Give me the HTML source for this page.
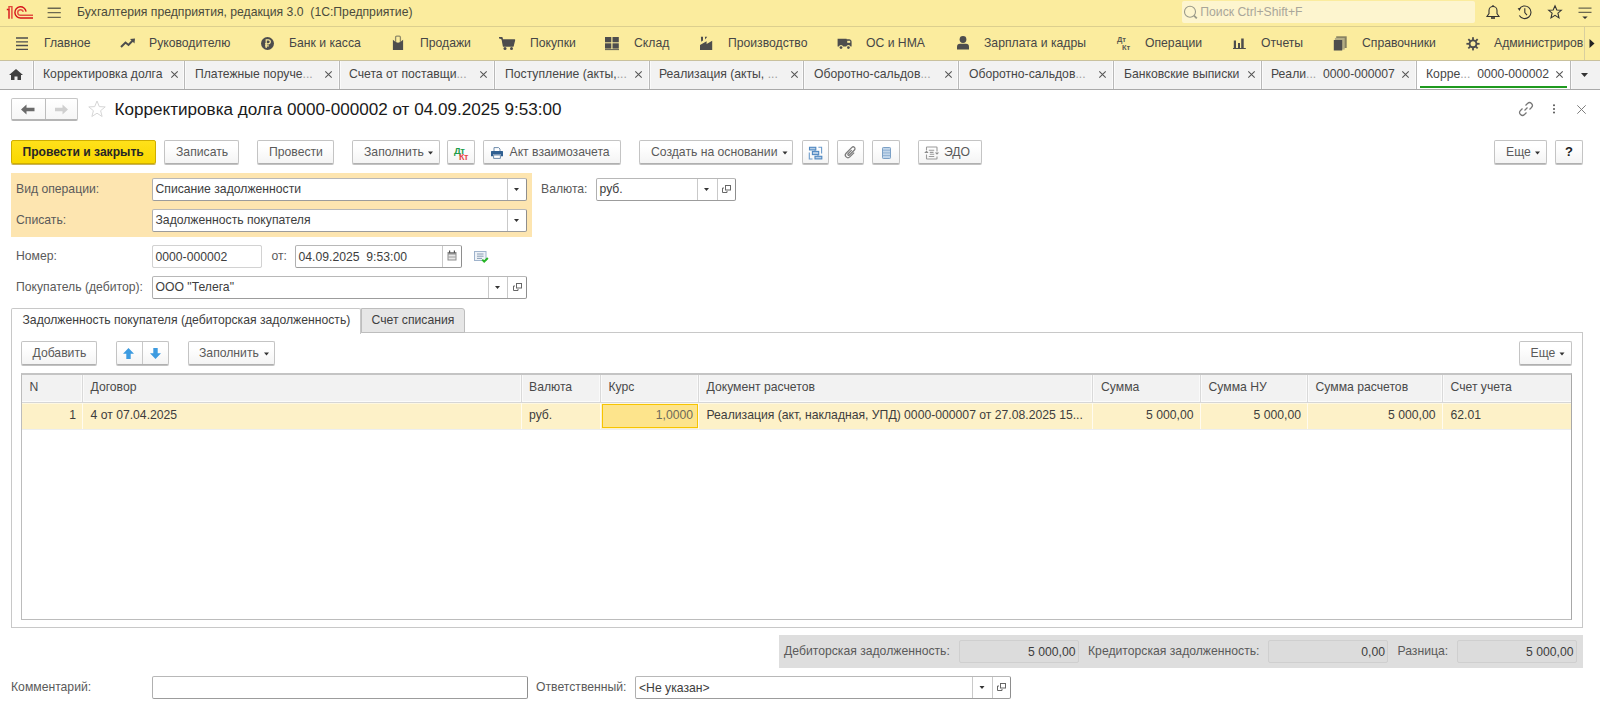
<!DOCTYPE html>
<html><head><meta charset="utf-8">
<style>
*{box-sizing:border-box;margin:0;padding:0}
html,body{width:1600px;height:708px;overflow:hidden;background:#fff;font-family:"Liberation Sans",sans-serif;font-size:12px;color:#4d4d4d}
.a{position:absolute}
.t{position:absolute;white-space:nowrap}
svg{overflow:visible}
</style></head><body>
<div class="a" style="left:0px;top:0px;width:1600px;height:26px;background:#fbec9e"></div>
<div class="a" style="left:0px;top:26px;width:1600px;height:1px;background:#dccf8e"></div>
<svg class="a" style="left:0px;top:0px" width="40" height="26" viewBox="0 0 40 26"><g fill="none" stroke-width="1.45">
<path d="M6.8 9.5 H9 V18.8" stroke="#d7141b"/><path d="M9 9.5 V6.6 H11.9 V18.8" stroke="#e2483c"/>
<path d="M26.05 11.6 A5.6 5.6 0 1 0 20.5 18 H33" stroke="#d7141b"/>
<path d="M23.2 11.95 A2.75 2.75 0 1 0 20.5 15.25 H33" stroke="#e2503e"/>
</g></svg>
<svg class="a" style="left:47px;top:7px" width="14" height="12" viewBox="0 0 14 12"><g stroke="#6b6850" stroke-width="1.4"><path d="M0.6 1.2H13.8M0.6 5.6H13.8M0.6 10.4H13.8"/></g></svg>
<div class="t" style="left:77px;top:5.27px;font-size:12.2px;line-height:14px;color:#4a4a3c;">Бухгалтерия предприятия, редакция 3.0&nbsp; (1С:Предприятие)</div>
<div class="a" style="left:1182px;top:1px;width:293px;height:22px;background:#fdf5cf;border-radius:2px"></div>
<svg class="a" style="left:1183px;top:5px" width="16" height="16" viewBox="0 0 16 16"><g fill="none" stroke="#9a9a8a" stroke-width="1.1"><circle cx="7" cy="6.7" r="5.5"/><path d="M11 10.7 L13.8 13.4" stroke-width="1.8"/></g></svg>
<div class="t" style="left:1200.3px;top:4.97px;font-size:12.2px;line-height:14px;color:#a9a69a;">Поиск Ctrl+Shift+F</div>
<svg class="a" style="left:1486px;top:5px" width="14" height="14" viewBox="0 0 14 14"><g fill="none" stroke="#333" stroke-width="1.1"><path d="M1 11.5 H13 L11 8.5 V5.5 A4 4 0 0 0 3 5.5 V8.5 Z"/></g><rect x="5" y="12.2" width="4" height="1.6" fill="#333"/><circle cx="7" cy="0.9" r="0.8" fill="#333"/></svg>
<svg class="a" style="left:1517px;top:5px" width="15" height="15" viewBox="0 0 15 15"><g fill="none" stroke="#333" stroke-width="1.1"><path d="M2.2 4.2 A6.3 6.3 0 1 1 2.3 10.5"/><path d="M7.8 3.3 V7.6 L10 10.2"/></g><path d="M0.6 3.2 L3.8 3 L2.6 6 Z" fill="#333"/></svg>
<svg class="a" style="left:1548px;top:5px" width="14" height="14" viewBox="0 0 14 14"><path d="M7 0.8 L8.8 5 L13.3 5.3 L9.9 8.2 L11 12.9 L7 10.4 L3 12.9 L4.1 8.2 L0.7 5.3 L5.2 5 Z" fill="none" stroke="#333" stroke-width="1.1" stroke-linejoin="miter"/></svg>
<svg class="a" style="left:1578px;top:6px" width="14" height="14" viewBox="0 0 14 14"><g stroke="#6b6850" stroke-width="1.3"><path d="M0.5 2.1H13.5M0.5 6.4H13.5"/></g><path d="M4.3 10.6 H9.7 L7 13 Z" fill="#333"/></svg>
<div class="a" style="left:0px;top:27px;width:1600px;height:33px;background:#fbec9e"></div>
<div class="a" style="left:0px;top:60px;width:1600px;height:1px;background:#c9c19d"></div>
<svg class="a" style="left:16px;top:37px" width="12" height="13" viewBox="0 0 12 13"><g stroke="#4d4d4d" stroke-width="1.3"><path d="M0 1H12M0 4.8H12M0 8.5H12M0 12.3H12"/></g></svg>
<div class="t" style="left:44px;top:35.87px;font-size:12.2px;line-height:14px;color:#464646;">Главное</div>
<div class="t" style="left:149px;top:35.87px;font-size:12.2px;line-height:14px;color:#464646;">Руководителю</div>
<div class="t" style="left:289px;top:35.87px;font-size:12.2px;line-height:14px;color:#464646;">Банк и касса</div>
<div class="t" style="left:420px;top:35.87px;font-size:12.2px;line-height:14px;color:#464646;">Продажи</div>
<div class="t" style="left:530px;top:35.87px;font-size:12.2px;line-height:14px;color:#464646;">Покупки</div>
<div class="t" style="left:634px;top:35.87px;font-size:12.2px;line-height:14px;color:#464646;">Склад</div>
<div class="t" style="left:728px;top:35.87px;font-size:12.2px;line-height:14px;color:#464646;">Производство</div>
<div class="t" style="left:866px;top:35.87px;font-size:12.2px;line-height:14px;color:#464646;">ОС и НМА</div>
<div class="t" style="left:984px;top:35.87px;font-size:12.2px;line-height:14px;color:#464646;">Зарплата и кадры</div>
<div class="t" style="left:1145px;top:35.87px;font-size:12.2px;line-height:14px;color:#464646;">Операции</div>
<div class="t" style="left:1261px;top:35.87px;font-size:12.2px;line-height:14px;color:#464646;">Отчеты</div>
<div class="t" style="left:1362px;top:35.87px;font-size:12.2px;line-height:14px;color:#464646;">Справочники</div>
<div class="t" style="left:1494px;top:35.87px;font-size:12.2px;line-height:14px;color:#464646;">Администриров</div>
<svg class="a" style="left:120px;top:38px" width="16" height="10" viewBox="0 0 16 10"><path d="M1 9 L5.5 4.5 L8.5 7 L13 2.2" fill="none" stroke="#4d4d4d" stroke-width="2"/><path d="M10 1 L15 0.5 L14.5 5.5 Z" fill="#4d4d4d"/></svg>
<svg class="a" style="left:261px;top:36.5px" width="13" height="13" viewBox="0 0 13 13"><circle cx="6.5" cy="6.5" r="6.5" fill="#4d4d4d"/><g fill="none" stroke="#fbec9e" stroke-width="1.2"><path d="M5.2 11 V2.8 H7.3 A2 2 0 0 1 7.3 6.8 H4 M4 8.8 H7.8"/></g></svg>
<svg class="a" style="left:392px;top:35px" width="12" height="15" viewBox="0 0 12 15"><path d="M3.6 7.5 V2.4 Q3.6 1.2 4.8 1.2 H7.2 Q8.4 1.2 8.4 2.4 V7.5" fill="none" stroke="#8f8a68" stroke-width="1.3"/><path d="M0.9 4.8 Q6 10.5 11.1 4.8 V14.9 H0.9 Z" fill="#4d4d4d"/></svg>
<svg class="a" style="left:499px;top:37px" width="16" height="13" viewBox="0 0 16 13"><path d="M0 0.8 H3 L4.5 9 H14 L15.5 3 H3.5" fill="#4d4d4d" stroke="#4d4d4d" stroke-width="1.4" stroke-linejoin="round"/><circle cx="6" cy="11.5" r="1.5" fill="#4d4d4d"/><circle cx="12.5" cy="11.5" r="1.5" fill="#4d4d4d"/></svg>
<svg class="a" style="left:605px;top:37px" width="14" height="13" viewBox="0 0 14 13"><g fill="#4d4d4d"><rect x="0" y="0" width="6.3" height="5.3"/><rect x="7.5" y="0" width="6.3" height="5.3"/><rect x="0" y="6.3" width="6.3" height="5.3"/><rect x="7.5" y="6.3" width="6.3" height="5.3"/><rect x="0" y="12.2" width="14" height="0.9"/></g></svg>
<svg class="a" style="left:700px;top:36px" width="13" height="14" viewBox="0 0 13 14"><path d="M0 9 L6.6 5.2 V8 L12.2 4.8 V14 H0 Z" fill="#4d4d4d"/><path d="M0.9 0.8 H3 V4.6 L1.2 5.8 Z M4.9 0.8 H7.2 L5.3 3.6 Z" fill="#4d4d4d"/></svg>
<svg class="a" style="left:837px;top:38px" width="15" height="12" viewBox="0 0 15 12"><path d="M0.6 0.7 H9.6 V1.3 H12.4 Q14.6 1.5 14.6 3.6 V8.6 H13.6 A2.3 2.3 0 0 0 9.2 8.6 H6.2 A2.3 2.3 0 0 0 1.8 8.6 H0.6 Z" fill="#4d4d4d"/><rect x="10.2" y="2.8" width="3" height="2" fill="#fbec9e"/><circle cx="4" cy="9.6" r="1.4" fill="#4d4d4d"/><circle cx="11.4" cy="9.6" r="1.4" fill="#4d4d4d"/></svg>
<svg class="a" style="left:957px;top:36px" width="12" height="14" viewBox="0 0 12 14"><circle cx="6" cy="3.5" r="3.4" fill="#4d4d4d"/><path d="M0 13.5 V11 Q0 7.8 3 7.8 H9 Q12 7.8 12 11 V13.5 Z" fill="#4d4d4d"/></svg>
<div class="t" style="left:1117px;top:36px;font-size:7.5px;line-height:7px;font-weight:bold;color:#5a5a50">Дт</div>
<div class="t" style="left:1122px;top:43.5px;font-size:7.5px;line-height:7px;font-weight:bold;color:#5a5a50">Кт</div>
<svg class="a" style="left:1233px;top:38px" width="13" height="12" viewBox="0 0 13 12"><g fill="#4d4d4d"><rect x="0.8" y="2.5" width="2.2" height="8"/><rect x="5" y="5" width="2" height="5.5"/><rect x="8.2" y="0.5" width="2.5" height="10"/><rect x="0" y="10" width="12.8" height="1"/></g></svg>
<svg class="a" style="left:1333px;top:36px" width="14" height="15" viewBox="0 0 14 15"><rect x="3.2" y="0.3" width="10.5" height="11.7" fill="#858060"/><rect x="1.9" y="1.9" width="9.8" height="11.7" fill="#b4ad85"/><rect x="0.8" y="4" width="8.4" height="10.5" fill="#4d4d4d"/></svg>
<svg class="a" style="left:1465.5px;top:36.5px" width="14" height="14" viewBox="0 0 14 14"><g transform="translate(7 6.8)" fill="#4d4d4d"><circle r="4.4"/><rect x="-0.9" y="-6.6" width="1.8" height="3" transform="rotate(0)"/><rect x="-0.9" y="-6.6" width="1.8" height="3" transform="rotate(45)"/><rect x="-0.9" y="-6.6" width="1.8" height="3" transform="rotate(90)"/><rect x="-0.9" y="-6.6" width="1.8" height="3" transform="rotate(135)"/><rect x="-0.9" y="-6.6" width="1.8" height="3" transform="rotate(180)"/><rect x="-0.9" y="-6.6" width="1.8" height="3" transform="rotate(225)"/><rect x="-0.9" y="-6.6" width="1.8" height="3" transform="rotate(270)"/><rect x="-0.9" y="-6.6" width="1.8" height="3" transform="rotate(315)"/></g><circle cx="7" cy="6.8" r="2.5" fill="#fbec9e"/></svg>
<div class="a" style="left:1584px;top:27px;width:1px;height:33px;background:#d8cf9f"></div>
<svg class="a" style="left:1589px;top:39px" width="6" height="9" viewBox="0 0 6 9"><path d="M0.5 0 L5.5 4.5 L0.5 9 Z" fill="#222"/></svg>
<div class="a" style="left:0px;top:61px;width:1600px;height:28px;background:#f2f2f2"></div>
<div class="a" style="left:0px;top:89px;width:1600px;height:1px;background:#a9a9a9"></div>
<svg class="a" style="left:9px;top:69px" width="14" height="11" viewBox="0 0 14 11"><path d="M7 0 L14 6 H12 V11 H8.5 V7.5 H5.5 V11 H2 V6 H0 Z" fill="#404040"/></svg>
<div class="a" style="left:32px;top:61px;width:3px;height:28px;background:#fafafa"></div>
<div class="a" style="left:33px;top:61px;width:1px;height:28px;background:#b9b9b9"></div>
<div class="a" style="left:183px;top:61px;width:3px;height:28px;background:#fafafa"></div>
<div class="a" style="left:184px;top:61px;width:1px;height:28px;background:#b9b9b9"></div>
<div class="a" style="left:338px;top:61px;width:3px;height:28px;background:#fafafa"></div>
<div class="a" style="left:339px;top:61px;width:1px;height:28px;background:#b9b9b9"></div>
<div class="a" style="left:493px;top:61px;width:3px;height:28px;background:#fafafa"></div>
<div class="a" style="left:494px;top:61px;width:1px;height:28px;background:#b9b9b9"></div>
<div class="a" style="left:648px;top:61px;width:3px;height:28px;background:#fafafa"></div>
<div class="a" style="left:649px;top:61px;width:1px;height:28px;background:#b9b9b9"></div>
<div class="a" style="left:802px;top:61px;width:3px;height:28px;background:#fafafa"></div>
<div class="a" style="left:803px;top:61px;width:1px;height:28px;background:#b9b9b9"></div>
<div class="a" style="left:957px;top:61px;width:3px;height:28px;background:#fafafa"></div>
<div class="a" style="left:958px;top:61px;width:1px;height:28px;background:#b9b9b9"></div>
<div class="a" style="left:1112px;top:61px;width:3px;height:28px;background:#fafafa"></div>
<div class="a" style="left:1113px;top:61px;width:1px;height:28px;background:#b9b9b9"></div>
<div class="a" style="left:1260px;top:61px;width:3px;height:28px;background:#fafafa"></div>
<div class="a" style="left:1261px;top:61px;width:1px;height:28px;background:#b9b9b9"></div>
<div class="a" style="left:1415px;top:61px;width:3px;height:28px;background:#fafafa"></div>
<div class="a" style="left:1416px;top:61px;width:1px;height:28px;background:#b9b9b9"></div>
<div class="a" style="left:1569px;top:61px;width:3px;height:28px;background:#fafafa"></div>
<div class="a" style="left:1570px;top:61px;width:1px;height:28px;background:#b9b9b9"></div>
<div class="a" style="left:1417px;top:61px;width:153px;height:28px;background:#fff"></div>
<div class="a" style="left:1420px;top:86px;width:147px;height:1.6px;background:#1f9a1f"></div>
<div class="t" style="left:43px;top:66.87px;font-size:12.2px;line-height:14px;color:#464646;">Корректировка долга</div>
<svg class="a" style="left:170.5px;top:71px" width="7" height="7" viewBox="0 0 7 7"><path d="M0.3 0.3 L6.7 6.7 M6.7 0.3 L0.3 6.7" stroke="#555" stroke-width="1.05"/></svg>
<div class="t" style="left:195px;top:66.87px;font-size:12.2px;line-height:14px;color:#464646;">Платежные поруче<span style="color:#a0a0a0">...</span></div>
<svg class="a" style="left:325px;top:71px" width="7" height="7" viewBox="0 0 7 7"><path d="M0.3 0.3 L6.7 6.7 M6.7 0.3 L0.3 6.7" stroke="#555" stroke-width="1.05"/></svg>
<div class="t" style="left:349px;top:66.87px;font-size:12.2px;line-height:14px;color:#464646;">Счета от поставщи<span style="color:#a0a0a0">...</span></div>
<svg class="a" style="left:480px;top:71px" width="7" height="7" viewBox="0 0 7 7"><path d="M0.3 0.3 L6.7 6.7 M6.7 0.3 L0.3 6.7" stroke="#555" stroke-width="1.05"/></svg>
<div class="t" style="left:505px;top:66.87px;font-size:12.2px;line-height:14px;color:#464646;">Поступление (акты,<span style="color:#a0a0a0">...</span></div>
<svg class="a" style="left:635px;top:71px" width="7" height="7" viewBox="0 0 7 7"><path d="M0.3 0.3 L6.7 6.7 M6.7 0.3 L0.3 6.7" stroke="#555" stroke-width="1.05"/></svg>
<div class="t" style="left:659px;top:66.87px;font-size:12.2px;line-height:14px;color:#464646;">Реализация (акты, <span style="color:#a0a0a0">...</span></div>
<svg class="a" style="left:791px;top:71px" width="7" height="7" viewBox="0 0 7 7"><path d="M0.3 0.3 L6.7 6.7 M6.7 0.3 L0.3 6.7" stroke="#555" stroke-width="1.05"/></svg>
<div class="t" style="left:814px;top:66.87px;font-size:12.2px;line-height:14px;color:#464646;">Оборотно-сальдов<span style="color:#a0a0a0">...</span></div>
<svg class="a" style="left:945px;top:71px" width="7" height="7" viewBox="0 0 7 7"><path d="M0.3 0.3 L6.7 6.7 M6.7 0.3 L0.3 6.7" stroke="#555" stroke-width="1.05"/></svg>
<div class="t" style="left:969px;top:66.87px;font-size:12.2px;line-height:14px;color:#464646;">Оборотно-сальдов<span style="color:#a0a0a0">...</span></div>
<svg class="a" style="left:1099px;top:71px" width="7" height="7" viewBox="0 0 7 7"><path d="M0.3 0.3 L6.7 6.7 M6.7 0.3 L0.3 6.7" stroke="#555" stroke-width="1.05"/></svg>
<div class="t" style="left:1124px;top:66.87px;font-size:12.2px;line-height:14px;color:#464646;">Банковские выписки</div>
<svg class="a" style="left:1248px;top:71px" width="7" height="7" viewBox="0 0 7 7"><path d="M0.3 0.3 L6.7 6.7 M6.7 0.3 L0.3 6.7" stroke="#555" stroke-width="1.05"/></svg>
<div class="t" style="left:1271px;top:66.87px;font-size:12.2px;line-height:14px;color:#464646;">Реали<span style="color:#a0a0a0">...</span>&nbsp; 0000-000007</div>
<svg class="a" style="left:1402px;top:71px" width="7" height="7" viewBox="0 0 7 7"><path d="M0.3 0.3 L6.7 6.7 M6.7 0.3 L0.3 6.7" stroke="#555" stroke-width="1.05"/></svg>
<div class="t" style="left:1426px;top:66.87px;font-size:12.2px;line-height:14px;color:#464646;">Корре<span style="color:#a0a0a0">...</span>&nbsp; 0000-000002</div>
<svg class="a" style="left:1556px;top:71px" width="7" height="7" viewBox="0 0 7 7"><path d="M0.3 0.3 L6.7 6.7 M6.7 0.3 L0.3 6.7" stroke="#555" stroke-width="1.05"/></svg>
<svg class="a" style="left:0;top:0" width="1600" height="708" viewBox="0 0 1600 708" pointer-events="none"><path d="M1581.0 73.0 H1588.0 L1584.5 77.0 Z" fill="#333"/></svg>
<div class="a" style="left:11px;top:98px;width:67px;height:23px;border:1px solid #c6c6c6;border-bottom:2px solid #b5b5b5;border-radius:2px;background:linear-gradient(#fff,#f6f6f6)"></div>
<div class="a" style="left:45px;top:99px;width:1px;height:20px;background:#bdbdbd"></div>
<svg class="a" style="left:21px;top:104px" width="14" height="11" viewBox="0 0 14 11"><path d="M0 5.5 L5.5 0.5 V3.8 H13.5 V7.2 H5.5 V10.5 Z" fill="#6a6a6a"/></svg>
<svg class="a" style="left:55px;top:104px" width="13" height="11" viewBox="0 0 13 11"><path d="M13 5.5 L7.5 0.5 V3.8 H0 V7.2 H7.5 V10.5 Z" fill="#cfcfcf"/></svg>
<svg class="a" style="left:88px;top:100px" width="18" height="18" viewBox="0 0 18 18"><path d="M9 1 L11.3 6.6 L17.2 6.9 L12.6 10.7 L14.1 16.5 L9 13.2 L3.9 16.5 L5.4 10.7 L0.8 6.9 L6.7 6.6 Z" fill="none" stroke="#d6d6d6" stroke-width="1"/></svg>
<div class="t" style="left:114.5px;top:100.07px;font-size:17.1px;line-height:20px;color:#1a1a1a;">Корректировка долга 0000-000002 от 04.09.2025 9:53:00</div>
<svg class="a" style="left:1518px;top:101px" width="16" height="16" viewBox="0 0 16 16"><g fill="none" stroke="#777" stroke-width="1.2"><path d="M6.5 9.5 L9.5 6.5"/><path d="M7.5 4.5 L9.5 2.5 A2.6 2.6 0 0 1 13.5 6.5 L11.5 8.5"/><path d="M8.5 11.5 L6.5 13.5 A2.6 2.6 0 0 1 2.5 9.5 L4.5 7.5"/></g></svg>
<svg class="a" style="left:1552px;top:104px" width="4" height="12" viewBox="0 0 4 12"><g fill="#555"><circle cx="2" cy="1.2" r="1"/><circle cx="2" cy="4.9" r="1"/><circle cx="2" cy="8.5" r="1"/></g></svg>
<svg class="a" style="left:1577px;top:104.5px" width="9" height="9" viewBox="0 0 9 9"><path d="M0.3 0.3 L8.7 8.7 M8.7 0.3 L0.3 8.7" stroke="#777" stroke-width="0.95"/></svg>
<div class="a" style="left:11px;top:140px;width:145px;height:24px;border:1px solid #cfae00;border-radius:2px;background:linear-gradient(#ffe11a,#f9d800);box-shadow:0 1px 0 #c7b25a"></div>
<div class="t" style="left:22.5px;top:144.91px;font-size:12.1px;line-height:14px;color:#262626;font-weight:bold;">Провести и закрыть</div>
<div class="a" style="left:164px;top:140px;width:75px;height:24px;border:1px solid #c4c4c4;border-bottom-color:#b0b0b0;border-radius:2px;background:linear-gradient(#ffffff 25%,#f4f4f4);box-shadow:0 1px 0 #c2c2c2"></div>
<div class="t" style="left:176px;top:144.87px;font-size:12.2px;line-height:14px;color:#5a5a5a;">Записать</div>
<div class="a" style="left:257px;top:140px;width:77px;height:24px;border:1px solid #c4c4c4;border-bottom-color:#b0b0b0;border-radius:2px;background:linear-gradient(#ffffff 25%,#f4f4f4);box-shadow:0 1px 0 #c2c2c2"></div>
<div class="t" style="left:269px;top:144.87px;font-size:12.2px;line-height:14px;color:#5a5a5a;">Провести</div>
<div class="a" style="left:352px;top:140px;width:88px;height:24px;border:1px solid #c4c4c4;border-bottom-color:#b0b0b0;border-radius:2px;background:linear-gradient(#ffffff 25%,#f4f4f4);box-shadow:0 1px 0 #c2c2c2"></div>
<div class="t" style="left:364px;top:144.87px;font-size:12.2px;line-height:14px;color:#5a5a5a;">Заполнить</div>
<svg class="a" style="left:0;top:0" width="1600" height="708" viewBox="0 0 1600 708" pointer-events="none"><path d="M428.0 151.5 H433.0 L430.5 154.5 Z" fill="#333"/></svg>
<div class="a" style="left:447px;top:140px;width:28px;height:24px;border:1px solid #c4c4c4;border-bottom-color:#b0b0b0;border-radius:2px;background:linear-gradient(#ffffff 25%,#f4f4f4);box-shadow:0 1px 0 #c2c2c2"></div>
<div class="t" style="left:454px;top:145.5px;font-size:9.5px;line-height:9px;color:#1f9e4a;font-weight:bold;letter-spacing:-0.4px">Дт</div>
<div class="t" style="left:459px;top:152.5px;font-size:9px;line-height:9px;color:#e8474a;font-weight:bold;letter-spacing:-0.4px">Кт</div>
<div class="a" style="left:483px;top:140px;width:138px;height:24px;border:1px solid #c4c4c4;border-bottom-color:#b0b0b0;border-radius:2px;background:linear-gradient(#ffffff 25%,#f4f4f4);box-shadow:0 1px 0 #c2c2c2"></div>
<svg class="a" style="left:491px;top:147px" width="12" height="12" viewBox="0 0 12 12"><path d="M3 4 V0.6 H7.6 L9 2 V4" fill="#fff" stroke="#5e7fa3" stroke-width="0.9"/><path d="M0 4.6 Q0 4 0.6 4 H11.4 Q12 4 12 4.6 V9.2 H10 V7.6 H2 V9.2 H0 Z" fill="#2f5f91"/><path d="M2.6 8 H9.4 V11.4 H2.6 Z" fill="#fff" stroke="#5e7fa3" stroke-width="0.9"/></svg>
<div class="t" style="left:509.5px;top:144.87px;font-size:12.2px;line-height:14px;color:#5a5a5a;">Акт взаимозачета</div>
<div class="a" style="left:639px;top:140px;width:154px;height:24px;border:1px solid #c4c4c4;border-bottom-color:#b0b0b0;border-radius:2px;background:linear-gradient(#ffffff 25%,#f4f4f4);box-shadow:0 1px 0 #c2c2c2"></div>
<div class="t" style="left:651px;top:144.87px;font-size:12.2px;line-height:14px;color:#5a5a5a;">Создать на основании</div>
<svg class="a" style="left:0;top:0" width="1600" height="708" viewBox="0 0 1600 708" pointer-events="none"><path d="M782.5 151.5 H787.5 L785 154.5 Z" fill="#333"/></svg>
<div class="a" style="left:802px;top:140px;width:27px;height:24px;border:1px solid #c4c4c4;border-bottom-color:#b0b0b0;border-radius:2px;background:linear-gradient(#ffffff 25%,#f4f4f4);box-shadow:0 1px 0 #c2c2c2"></div>
<svg class="a" style="left:808px;top:146px" width="15" height="14" viewBox="0 0 15 14"><g fill="#b5cde6" stroke="#4f88c1" stroke-width="1.1"><rect x="1.5" y="1.3" width="6.3" height="2.6"/><rect x="4.4" y="5.4" width="6.3" height="3.2"/><rect x="7" y="10.3" width="6.8" height="2.6"/></g><g fill="none" stroke="#6b9bcb" stroke-width="1.1"><path d="M10.4 1.3 H13.6 V7.6"/><path d="M1.3 6.4 V13 H4.5"/><path d="M7 3.9 V5.4 M10 8.6 V10.3"/></g></svg>
<div class="a" style="left:837px;top:140px;width:27px;height:24px;border:1px solid #c4c4c4;border-bottom-color:#b0b0b0;border-radius:2px;background:linear-gradient(#ffffff 25%,#f4f4f4);box-shadow:0 1px 0 #c2c2c2"></div>
<svg class="a" style="left:844px;top:146px" width="13" height="13" viewBox="0 0 13 13"><g transform="translate(6.5 6.5) rotate(45)"><path d="M2.6 -2.5 V3.6 A2.6 2.6 0 0 1 -2.6 3.6 V-4.6 A1.8 1.8 0 0 1 1 -4.6 V2.6 A0.9 0.9 0 0 1 -0.8 2.6 V-2.5" fill="none" stroke="#7b7b7b" stroke-width="1.25"/></g></svg>
<div class="a" style="left:872px;top:140px;width:28px;height:24px;border:1px solid #c4c4c4;border-bottom-color:#b0b0b0;border-radius:2px;background:linear-gradient(#ffffff 25%,#f4f4f4);box-shadow:0 1px 0 #c2c2c2"></div>
<svg class="a" style="left:882px;top:147px" width="9" height="12" viewBox="0 0 9 12"><rect x="0.5" y="0.5" width="8" height="11" rx="0.8" fill="#c2d6ea" stroke="#7ba0c6"/><g stroke="#8fb0d2" stroke-width="1"><path d="M1 3.2H8M1 5.9H8M1 8.6H8"/></g></svg>
<div class="a" style="left:918px;top:140px;width:64px;height:24px;border:1px solid #c4c4c4;border-bottom-color:#b0b0b0;border-radius:2px;background:linear-gradient(#ffffff 25%,#f4f4f4);box-shadow:0 1px 0 #c2c2c2"></div>
<svg class="a" style="left:924px;top:146px" width="15" height="14" viewBox="0 0 15 14"><g fill="none" stroke="#9a9a9a" stroke-width="1.1"><path d="M2.5 4.2 V1.6 Q2.5 1 3.1 1 H12.4 Q13 1 13 1.6 V5.5"/><path d="M2.5 8.5 V12.4 Q2.5 13 3.1 13 H12.4 Q13 13 13 12.4 V10.6"/><path d="M4.8 4.3H10.2M5.8 6.4H9.5M5.8 8.3H10.2M4.8 10.5H10.2"/></g><path d="M0.2 7 L2.6 4.6 L4.6 7 Z M10.9 6.4 L15.1 6.4 L13 8.8 Z" fill="#8c8c8c"/></svg>
<div class="t" style="left:944px;top:144.87px;font-size:12.2px;line-height:14px;color:#5a5a5a;">ЭДО</div>
<div class="a" style="left:1494px;top:140px;width:53px;height:24px;border:1px solid #c4c4c4;border-bottom-color:#b0b0b0;border-radius:2px;background:linear-gradient(#ffffff 25%,#f4f4f4);box-shadow:0 1px 0 #c2c2c2"></div>
<div class="t" style="left:1506px;top:144.87px;font-size:12.2px;line-height:14px;color:#5a5a5a;">Еще</div>
<svg class="a" style="left:0;top:0" width="1600" height="708" viewBox="0 0 1600 708" pointer-events="none"><path d="M1535.0 151.5 H1540.0 L1537.5 154.5 Z" fill="#333"/></svg>
<div class="a" style="left:1555px;top:140px;width:28px;height:24px;border:1px solid #c4c4c4;border-bottom-color:#b0b0b0;border-radius:2px;background:linear-gradient(#ffffff 25%,#f4f4f4);box-shadow:0 1px 0 #c2c2c2"></div>
<div class="t" style="left:1565px;top:144.10px;font-size:13px;line-height:15px;color:#222;font-weight:bold;">?</div>
<div class="a" style="left:11px;top:173px;width:521px;height:64px;background:#fde5b0"></div>
<div class="t" style="left:16px;top:181.87px;font-size:12.2px;line-height:14px;color:#5a5a5a;">Вид операции:</div>
<div class="a" style="left:152px;top:178px;width:375px;height:23px;border:1px solid;border-color:#b8b8b8 #8e8e8e #9c9c9c #b0b0b0;border-radius:2px;background:#fff"></div>
<div class="a" style="left:507px;top:179px;width:1px;height:21px;background:#c9c9c9"></div>
<div class="t" style="left:155.5px;top:181.87px;font-size:12.2px;line-height:14px;color:#3d3d3d;">Списание задолженности</div>
<svg class="a" style="left:0;top:0" width="1600" height="708" viewBox="0 0 1600 708" pointer-events="none"><path d="M514.0 188.0 H519.0 L516.5 191.0 Z" fill="#333"/></svg>
<div class="t" style="left:16px;top:212.87px;font-size:12.2px;line-height:14px;color:#5a5a5a;">Списать:</div>
<div class="a" style="left:152px;top:209px;width:375px;height:23px;border:1px solid;border-color:#b8b8b8 #8e8e8e #9c9c9c #b0b0b0;border-radius:2px;background:#fff"></div>
<div class="a" style="left:507px;top:210px;width:1px;height:21px;background:#c9c9c9"></div>
<div class="t" style="left:155.5px;top:212.87px;font-size:12.2px;line-height:14px;color:#3d3d3d;">Задолженность покупателя</div>
<svg class="a" style="left:0;top:0" width="1600" height="708" viewBox="0 0 1600 708" pointer-events="none"><path d="M514.0 219.0 H519.0 L516.5 222.0 Z" fill="#333"/></svg>
<div class="t" style="left:541px;top:181.87px;font-size:12.2px;line-height:14px;color:#5a5a5a;">Валюта:</div>
<div class="a" style="left:596px;top:178px;width:140px;height:23px;border:1px solid;border-color:#b8b8b8 #8e8e8e #9c9c9c #b0b0b0;border-radius:2px;background:#fff"></div>
<div class="a" style="left:697px;top:179px;width:1px;height:21px;background:#c9c9c9"></div>
<div class="a" style="left:717px;top:179px;width:1px;height:21px;background:#c9c9c9"></div>
<div class="t" style="left:599.5px;top:181.87px;font-size:12.2px;line-height:14px;color:#3d3d3d;">руб.</div>
<svg class="a" style="left:0;top:0" width="1600" height="708" viewBox="0 0 1600 708" pointer-events="none"><path d="M704.0 188.0 H709.0 L706.5 191.0 Z" fill="#333"/></svg>
<svg class="a" style="left:722px;top:185px" width="9" height="8" viewBox="0 0 9 8"><g fill="none" stroke="#666" stroke-width="1"><rect x="3.5" y="0.5" width="5" height="4.5"/><path d="M2 3 H0.5 V7.5 H5 V6"/></g></svg>
<div class="t" style="left:16px;top:248.87px;font-size:12.2px;line-height:14px;color:#5a5a5a;">Номер:</div>
<div class="a" style="left:152px;top:245px;width:110px;height:23px;border:1px solid;border-color:#d2d2d2;border-radius:2px;background:#fff"></div>
<div class="a" style="left:152px;top:245px;width:110px;height:23px;border:1px solid #d2d2d2;border-radius:2px;background:#fff"></div>
<div class="t" style="left:155.5px;top:249.87px;font-size:12.2px;line-height:14px;color:#3d3d3d;">0000-000002</div>
<div class="t" style="left:271.5px;top:248.87px;font-size:12.2px;line-height:14px;color:#5a5a5a;">от:</div>
<div class="a" style="left:295px;top:245px;width:167px;height:23px;border:1px solid;border-color:#b8b8b8 #8e8e8e #9c9c9c #b0b0b0;border-radius:2px;background:#fff"></div>
<div class="a" style="left:442px;top:246px;width:1px;height:21px;background:#c9c9c9"></div>
<div class="t" style="left:298.5px;top:249.87px;font-size:12.2px;line-height:14px;color:#3d3d3d;">04.09.2025&nbsp; 9:53:00</div>
<svg class="a" style="left:447px;top:250px" width="10" height="11" viewBox="0 0 10 11"><path d="M0.5 2 H9.5 V10.5 H0.5 Z" fill="#8c8c8c"/><rect x="1.5" y="4.5" width="7" height="5" fill="#e8e8e8"/><rect x="2" y="0.5" width="1.2" height="2.5" fill="#555"/><rect x="6.8" y="0.5" width="1.2" height="2.5" fill="#555"/><path d="M1.5 7 H8.5" stroke="#8c8c8c" stroke-width="0.8"/></svg>
<svg class="a" style="left:474px;top:251px" width="15" height="12" viewBox="0 0 15 12"><rect x="0.5" y="0.5" width="11.5" height="9" fill="#eef2f7" stroke="#9fb3cc"/><g stroke="#7d93ad" stroke-width="0.9"><path d="M3 3H9.5M3 5.2H9.5M3 7.4H8"/></g><path d="M8.2 8.6 L10.2 10.6 L13.8 7" fill="none" stroke="#26b526" stroke-width="2"/></svg>
<div class="t" style="left:16px;top:280.37px;font-size:12.2px;line-height:14px;color:#5a5a5a;">Покупатель (дебитор):</div>
<div class="a" style="left:152px;top:276px;width:375px;height:23px;border:1px solid;border-color:#b8b8b8 #8e8e8e #9c9c9c #b0b0b0;border-radius:2px;background:#fff"></div>
<div class="a" style="left:488px;top:277px;width:1px;height:21px;background:#c9c9c9"></div>
<div class="a" style="left:507px;top:277px;width:1px;height:21px;background:#c9c9c9"></div>
<div class="t" style="left:155.5px;top:279.87px;font-size:12.2px;line-height:14px;color:#3d3d3d;">ООО "Телега"</div>
<svg class="a" style="left:0;top:0" width="1600" height="708" viewBox="0 0 1600 708" pointer-events="none"><path d="M495.0 286.0 H500.0 L497.5 289.0 Z" fill="#333"/></svg>
<svg class="a" style="left:513px;top:283px" width="9" height="8" viewBox="0 0 9 8"><g fill="none" stroke="#666" stroke-width="1"><rect x="3.5" y="0.5" width="5" height="4.5"/><path d="M2 3 H0.5 V7.5 H5 V6"/></g></svg>
<div class="a" style="left:11px;top:332px;width:1572px;height:296px;border:1px solid #c8c8c8;background:#fff"></div>
<div class="a" style="left:11px;top:308px;width:350px;height:26px;border:1px solid #c8c8c8;border-bottom:none;border-radius:2px 2px 0 0;background:#fff"></div>
<div class="a" style="left:361px;top:308px;width:104px;height:25px;border:1px solid #bdbdbd;border-radius:0 3px 0 0;background:#e6e6e6"></div>
<div class="t" style="left:22.5px;top:312.87px;font-size:12.2px;line-height:14px;color:#3d3d3d;">Задолженность покупателя (дебиторская задолженность)</div>
<div class="t" style="left:371.5px;top:312.87px;font-size:12.2px;line-height:14px;color:#404040;">Счет списания</div>
<div class="a" style="left:21px;top:341px;width:76px;height:24px;border:1px solid #c4c4c4;border-bottom-color:#b0b0b0;border-radius:2px;background:linear-gradient(#ffffff 25%,#f4f4f4);box-shadow:0 1px 0 #c2c2c2"></div>
<div class="t" style="left:32.5px;top:346.37px;font-size:12.2px;line-height:14px;color:#5a5a5a;">Добавить</div>
<div class="a" style="left:116px;top:341px;width:53px;height:24px;border:1px solid #c4c4c4;border-bottom-color:#b0b0b0;border-radius:2px;background:linear-gradient(#ffffff 25%,#f4f4f4);box-shadow:0 1px 0 #c2c2c2"></div>
<div class="a" style="left:142px;top:342px;width:1px;height:22px;background:#c8c8c8"></div>
<svg class="a" style="left:123px;top:348px" width="11" height="11" viewBox="0 0 11 11"><path d="M5.5 0 L11 5.8 H7.7 V11 H3.3 V5.8 H0 Z" fill="#3d9be0"/></svg>
<svg class="a" style="left:150px;top:348px" width="11" height="11" viewBox="0 0 11 11"><path d="M5.5 11 L11 5.2 H7.7 V0 H3.3 V5.2 H0 Z" fill="#3d9be0"/></svg>
<div class="a" style="left:188px;top:341px;width:87px;height:24px;border:1px solid #c4c4c4;border-bottom-color:#b0b0b0;border-radius:2px;background:linear-gradient(#ffffff 25%,#f4f4f4);box-shadow:0 1px 0 #c2c2c2"></div>
<div class="t" style="left:199px;top:346.37px;font-size:12.2px;line-height:14px;color:#5a5a5a;">Заполнить</div>
<svg class="a" style="left:0;top:0" width="1600" height="708" viewBox="0 0 1600 708" pointer-events="none"><path d="M264.0 352.5 H269.0 L266.5 355.5 Z" fill="#333"/></svg>
<div class="a" style="left:1519px;top:341px;width:53px;height:24px;border:1px solid #c4c4c4;border-bottom-color:#b0b0b0;border-radius:2px;background:linear-gradient(#ffffff 25%,#f4f4f4);box-shadow:0 1px 0 #c2c2c2"></div>
<div class="t" style="left:1530.5px;top:346.37px;font-size:12.2px;line-height:14px;color:#5a5a5a;">Еще</div>
<svg class="a" style="left:0;top:0" width="1600" height="708" viewBox="0 0 1600 708" pointer-events="none"><path d="M1559.5 352.5 H1564.5 L1562 355.5 Z" fill="#333"/></svg>
<div class="a" style="left:21px;top:373px;width:1551px;height:247px;border:1px solid #bcbcbc;border-top:2px solid #c4c4c4;border-right-color:#a8a8a8;background:#fff"></div>
<div class="a" style="left:22px;top:375px;width:1549px;height:28px;background:#f2f2f2"></div>
<div class="a" style="left:22px;top:401px;width:1549px;height:1px;background:#fbfbfb"></div>
<div class="a" style="left:22px;top:402px;width:1549px;height:1px;background:#d6d6d6"></div>
<div class="a" style="left:22px;top:403px;width:1549px;height:26px;background:#fdf1c8"></div>
<div class="a" style="left:22px;top:403px;width:1549px;height:1px;background:#fef8e2"></div>
<div class="a" style="left:22px;top:429px;width:1549px;height:1px;background:#eceef0"></div>
<div class="a" style="left:81px;top:375px;width:1px;height:26px;background:#fafafa"></div>
<div class="a" style="left:83px;top:375px;width:1px;height:26px;background:#fafafa"></div>
<div class="a" style="left:82px;top:375px;width:1px;height:27px;background:#d9d9d9"></div>
<div class="a" style="left:82px;top:403px;width:1px;height:26px;background:#fffbf0"></div>
<div class="a" style="left:520px;top:375px;width:1px;height:26px;background:#fafafa"></div>
<div class="a" style="left:522px;top:375px;width:1px;height:26px;background:#fafafa"></div>
<div class="a" style="left:521px;top:375px;width:1px;height:27px;background:#d9d9d9"></div>
<div class="a" style="left:521px;top:403px;width:1px;height:26px;background:#fffbf0"></div>
<div class="a" style="left:599px;top:375px;width:1px;height:26px;background:#fafafa"></div>
<div class="a" style="left:601px;top:375px;width:1px;height:26px;background:#fafafa"></div>
<div class="a" style="left:600px;top:375px;width:1px;height:27px;background:#d9d9d9"></div>
<div class="a" style="left:600px;top:403px;width:1px;height:26px;background:#fffbf0"></div>
<div class="a" style="left:697px;top:375px;width:1px;height:26px;background:#fafafa"></div>
<div class="a" style="left:699px;top:375px;width:1px;height:26px;background:#fafafa"></div>
<div class="a" style="left:698px;top:375px;width:1px;height:27px;background:#d9d9d9"></div>
<div class="a" style="left:698px;top:403px;width:1px;height:26px;background:#fffbf0"></div>
<div class="a" style="left:1091px;top:375px;width:1px;height:26px;background:#fafafa"></div>
<div class="a" style="left:1093px;top:375px;width:1px;height:26px;background:#fafafa"></div>
<div class="a" style="left:1092px;top:375px;width:1px;height:27px;background:#d9d9d9"></div>
<div class="a" style="left:1092px;top:403px;width:1px;height:26px;background:#fffbf0"></div>
<div class="a" style="left:1199px;top:375px;width:1px;height:26px;background:#fafafa"></div>
<div class="a" style="left:1201px;top:375px;width:1px;height:26px;background:#fafafa"></div>
<div class="a" style="left:1200px;top:375px;width:1px;height:27px;background:#d9d9d9"></div>
<div class="a" style="left:1200px;top:403px;width:1px;height:26px;background:#fffbf0"></div>
<div class="a" style="left:1306px;top:375px;width:1px;height:26px;background:#fafafa"></div>
<div class="a" style="left:1308px;top:375px;width:1px;height:26px;background:#fafafa"></div>
<div class="a" style="left:1307px;top:375px;width:1px;height:27px;background:#d9d9d9"></div>
<div class="a" style="left:1307px;top:403px;width:1px;height:26px;background:#fffbf0"></div>
<div class="a" style="left:1441px;top:375px;width:1px;height:26px;background:#fafafa"></div>
<div class="a" style="left:1443px;top:375px;width:1px;height:26px;background:#fafafa"></div>
<div class="a" style="left:1442px;top:375px;width:1px;height:27px;background:#d9d9d9"></div>
<div class="a" style="left:1442px;top:403px;width:1px;height:26px;background:#fffbf0"></div>
<div class="t" style="left:29.5px;top:380.37px;font-size:12.2px;line-height:14px;color:#4a4a4a;">N</div>
<div class="t" style="left:90.5px;top:380.37px;font-size:12.2px;line-height:14px;color:#4a4a4a;">Договор</div>
<div class="t" style="left:529px;top:380.37px;font-size:12.2px;line-height:14px;color:#4a4a4a;">Валюта</div>
<div class="t" style="left:608.5px;top:380.37px;font-size:12.2px;line-height:14px;color:#4a4a4a;">Курс</div>
<div class="t" style="left:706.5px;top:380.37px;font-size:12.2px;line-height:14px;color:#4a4a4a;">Документ расчетов</div>
<div class="t" style="left:1101px;top:380.37px;font-size:12.2px;line-height:14px;color:#4a4a4a;">Сумма</div>
<div class="t" style="left:1208.5px;top:380.37px;font-size:12.2px;line-height:14px;color:#4a4a4a;">Сумма НУ</div>
<div class="t" style="left:1315.5px;top:380.37px;font-size:12.2px;line-height:14px;color:#4a4a4a;">Сумма расчетов</div>
<div class="t" style="left:1450.5px;top:380.37px;font-size:12.2px;line-height:14px;color:#4a4a4a;">Счет учета</div>
<div class="t" style="right:1524px;top:407.87px;font-size:12.2px;line-height:14px;color:#3d3d3d;">1</div>
<div class="t" style="left:90.5px;top:407.87px;font-size:12.2px;line-height:14px;color:#3d3d3d;">4 от 07.04.2025</div>
<div class="t" style="left:529px;top:407.87px;font-size:12.2px;line-height:14px;color:#3d3d3d;">руб.</div>
<div class="a" style="left:602px;top:404px;width:96px;height:24px;border:1.5px solid #f7c400;background:#fde48c"></div>
<div class="t" style="right:907px;top:407.87px;font-size:12.2px;line-height:14px;color:#6e6a5a;">1,0000</div>
<div class="t" style="left:706.5px;top:407.87px;font-size:12.2px;line-height:14px;color:#3d3d3d;">Реализация (акт, накладная, УПД) 0000-000007 от 27.08.2025 15...</div>
<div class="t" style="right:406.5px;top:407.87px;font-size:12.2px;line-height:14px;color:#3d3d3d;">5 000,00</div>
<div class="t" style="right:299px;top:407.87px;font-size:12.2px;line-height:14px;color:#3d3d3d;">5 000,00</div>
<div class="t" style="right:164.5px;top:407.87px;font-size:12.2px;line-height:14px;color:#3d3d3d;">5 000,00</div>
<div class="t" style="left:1450.5px;top:407.87px;font-size:12.2px;line-height:14px;color:#3d3d3d;">62.01</div>
<div class="a" style="left:779px;top:635px;width:804px;height:33px;background:#dedede"></div>
<div class="t" style="left:784px;top:643.87px;font-size:12.2px;line-height:14px;color:#5a5a5a;">Дебиторская задолженность:</div>
<div class="a" style="left:959px;top:640px;width:120px;height:23px;border:1px solid #cfcfcf;border-radius:2px;background:#dcdcdc"></div>
<div class="t" style="right:524.5px;top:644.87px;font-size:12.2px;line-height:14px;color:#3d3d3d;">5 000,00</div>
<div class="t" style="left:1088px;top:643.87px;font-size:12.2px;line-height:14px;color:#5a5a5a;">Кредиторская задолженность:</div>
<div class="a" style="left:1268px;top:640px;width:120px;height:23px;border:1px solid #cfcfcf;border-radius:2px;background:#dcdcdc"></div>
<div class="t" style="right:215px;top:644.87px;font-size:12.2px;line-height:14px;color:#3d3d3d;">0,00</div>
<div class="t" style="left:1397.5px;top:643.87px;font-size:12.2px;line-height:14px;color:#5a5a5a;">Разница:</div>
<div class="a" style="left:1457px;top:640px;width:120px;height:23px;border:1px solid #cfcfcf;border-radius:2px;background:#dcdcdc"></div>
<div class="t" style="right:26.5px;top:644.87px;font-size:12.2px;line-height:14px;color:#3d3d3d;">5 000,00</div>
<div class="t" style="left:11px;top:679.87px;font-size:12.2px;line-height:14px;color:#5a5a5a;">Комментарий:</div>
<div class="a" style="left:152px;top:676px;width:376px;height:23px;border:1px solid;border-color:#b8b8b8 #8e8e8e #9c9c9c #b0b0b0;border-radius:2px;background:#fff"></div>
<div class="t" style="left:536px;top:679.87px;font-size:12.2px;line-height:14px;color:#5a5a5a;">Ответственный:</div>
<div class="a" style="left:635px;top:676px;width:376px;height:23px;border:1px solid;border-color:#b8b8b8 #8e8e8e #9c9c9c #b0b0b0;border-radius:2px;background:#fff"></div>
<div class="a" style="left:972px;top:677px;width:1px;height:21px;background:#c9c9c9"></div>
<div class="a" style="left:992px;top:677px;width:1px;height:21px;background:#c9c9c9"></div>
<div class="t" style="left:639px;top:680.87px;font-size:12.2px;line-height:14px;color:#3d3d3d;">&lt;Не указан&gt;</div>
<svg class="a" style="left:0;top:0" width="1600" height="708" viewBox="0 0 1600 708" pointer-events="none"><path d="M979.5 686.0 H984.5 L982 689.0 Z" fill="#333"/></svg>
<svg class="a" style="left:997px;top:683px" width="9" height="8" viewBox="0 0 9 8"><g fill="none" stroke="#666" stroke-width="1"><rect x="3.5" y="0.5" width="5" height="4.5"/><path d="M2 3 H0.5 V7.5 H5 V6"/></g></svg>
</body></html>
